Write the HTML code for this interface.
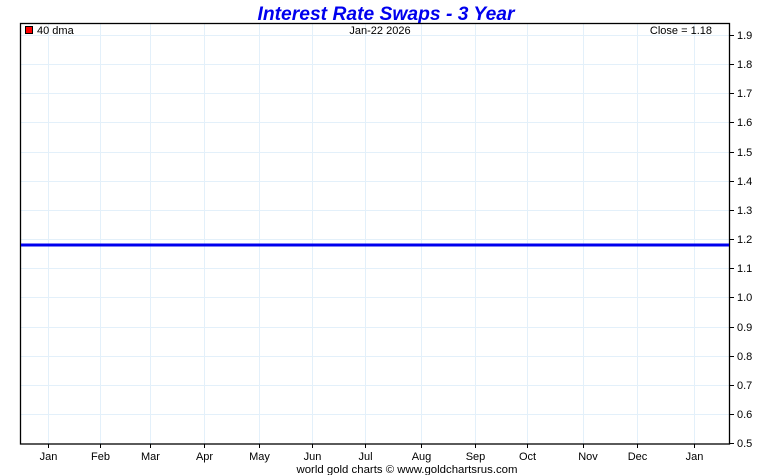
<!DOCTYPE html>
<html><head><meta charset="utf-8"><style>
html,body{margin:0;padding:0;background:#fff;width:772px;height:475px;overflow:hidden}
svg{display:block;font-family:"Liberation Sans",sans-serif}
</style></head><body>
<svg width="772" height="475" xmlns="http://www.w3.org/2000/svg">
<text x="386" y="20" text-anchor="middle" font-size="19" font-weight="bold" font-style="italic" fill="#0000ee" textLength="257" lengthAdjust="spacingAndGlyphs">Interest Rate Swaps - 3 Year</text>
<g stroke="#e3f0fa" stroke-width="1">
<line x1="48.5" y1="23" x2="48.5" y2="444"/><line x1="100.5" y1="23" x2="100.5" y2="444"/><line x1="150.5" y1="23" x2="150.5" y2="444"/><line x1="204.5" y1="23" x2="204.5" y2="444"/><line x1="259.5" y1="23" x2="259.5" y2="444"/><line x1="312.5" y1="23" x2="312.5" y2="444"/><line x1="365.5" y1="23" x2="365.5" y2="444"/><line x1="421.5" y1="23" x2="421.5" y2="444"/><line x1="475.5" y1="23" x2="475.5" y2="444"/><line x1="527.5" y1="23" x2="527.5" y2="444"/><line x1="583.5" y1="23" x2="583.5" y2="444"/><line x1="637.5" y1="23" x2="637.5" y2="444"/><line x1="694.5" y1="23" x2="694.5" y2="444"/>
<line x1="20" y1="35.5" x2="730" y2="35.5"/><line x1="20" y1="64.5" x2="730" y2="64.5"/><line x1="20" y1="93.5" x2="730" y2="93.5"/><line x1="20" y1="122.5" x2="730" y2="122.5"/><line x1="20" y1="152.5" x2="730" y2="152.5"/><line x1="20" y1="181.5" x2="730" y2="181.5"/><line x1="20" y1="210.5" x2="730" y2="210.5"/><line x1="20" y1="239.5" x2="730" y2="239.5"/><line x1="20" y1="268.5" x2="730" y2="268.5"/><line x1="20" y1="297.5" x2="730" y2="297.5"/><line x1="20" y1="327.5" x2="730" y2="327.5"/><line x1="20" y1="356.5" x2="730" y2="356.5"/><line x1="20" y1="385.5" x2="730" y2="385.5"/><line x1="20" y1="414.5" x2="730" y2="414.5"/>
</g>
<rect x="20.5" y="23.5" width="709" height="420.5" fill="none" stroke="#000" stroke-width="1.3"/>
<line x1="21" y1="245" x2="729" y2="245" stroke="#0000ee" stroke-width="3"/>
<g stroke="#000" stroke-width="1">
<line x1="730" y1="35.5" x2="734" y2="35.5"/><line x1="730" y1="64.5" x2="734" y2="64.5"/><line x1="730" y1="93.5" x2="734" y2="93.5"/><line x1="730" y1="122.5" x2="734" y2="122.5"/><line x1="730" y1="152.5" x2="734" y2="152.5"/><line x1="730" y1="181.5" x2="734" y2="181.5"/><line x1="730" y1="210.5" x2="734" y2="210.5"/><line x1="730" y1="239.5" x2="734" y2="239.5"/><line x1="730" y1="268.5" x2="734" y2="268.5"/><line x1="730" y1="297.5" x2="734" y2="297.5"/><line x1="730" y1="327.5" x2="734" y2="327.5"/><line x1="730" y1="356.5" x2="734" y2="356.5"/><line x1="730" y1="385.5" x2="734" y2="385.5"/><line x1="730" y1="414.5" x2="734" y2="414.5"/><line x1="730" y1="443.5" x2="734" y2="443.5"/>
<line x1="48.5" y1="444" x2="48.5" y2="448"/><line x1="100.5" y1="444" x2="100.5" y2="448"/><line x1="150.5" y1="444" x2="150.5" y2="448"/><line x1="204.5" y1="444" x2="204.5" y2="448"/><line x1="259.5" y1="444" x2="259.5" y2="448"/><line x1="312.5" y1="444" x2="312.5" y2="448"/><line x1="365.5" y1="444" x2="365.5" y2="448"/><line x1="421.5" y1="444" x2="421.5" y2="448"/><line x1="475.5" y1="444" x2="475.5" y2="448"/><line x1="527.5" y1="444" x2="527.5" y2="448"/><line x1="583.5" y1="444" x2="583.5" y2="448"/><line x1="637.5" y1="444" x2="637.5" y2="448"/><line x1="694.5" y1="444" x2="694.5" y2="448"/>
</g>
<g font-size="11" fill="#000">
<text x="737" y="39">1.9</text><text x="737" y="68">1.8</text><text x="737" y="97">1.7</text><text x="737" y="126">1.6</text><text x="737" y="156">1.5</text><text x="737" y="185">1.4</text><text x="737" y="214">1.3</text><text x="737" y="243">1.2</text><text x="737" y="272">1.1</text><text x="737" y="301">1.0</text><text x="737" y="331">0.9</text><text x="737" y="360">0.8</text><text x="737" y="389">0.7</text><text x="737" y="418">0.6</text><text x="737" y="447">0.5</text>
</g>
<g font-size="11" fill="#000" text-anchor="middle">
<text x="48.5" y="460">Jan</text><text x="100.5" y="460">Feb</text><text x="150.5" y="460">Mar</text><text x="204.5" y="460">Apr</text><text x="259.5" y="460">May</text><text x="312.5" y="460">Jun</text><text x="365.5" y="460">Jul</text><text x="421.5" y="460">Aug</text><text x="475.5" y="460">Sep</text><text x="527.5" y="460">Oct</text><text x="588" y="460">Nov</text><text x="637.5" y="460">Dec</text><text x="694.5" y="460">Jan</text>
<text x="407" y="473" textLength="221" lengthAdjust="spacingAndGlyphs">world gold charts © www.goldchartsrus.com</text>
<text x="380" y="34">Jan-22  2026</text>
</g>
<rect x="25.5" y="26.5" width="7" height="7" fill="#ff0000" stroke="#000" stroke-width="1"/>
<text x="37" y="34" font-size="11">40 dma</text>
<text x="712" y="34" font-size="11" text-anchor="end">Close = 1.18</text>
</svg>
</body></html>
